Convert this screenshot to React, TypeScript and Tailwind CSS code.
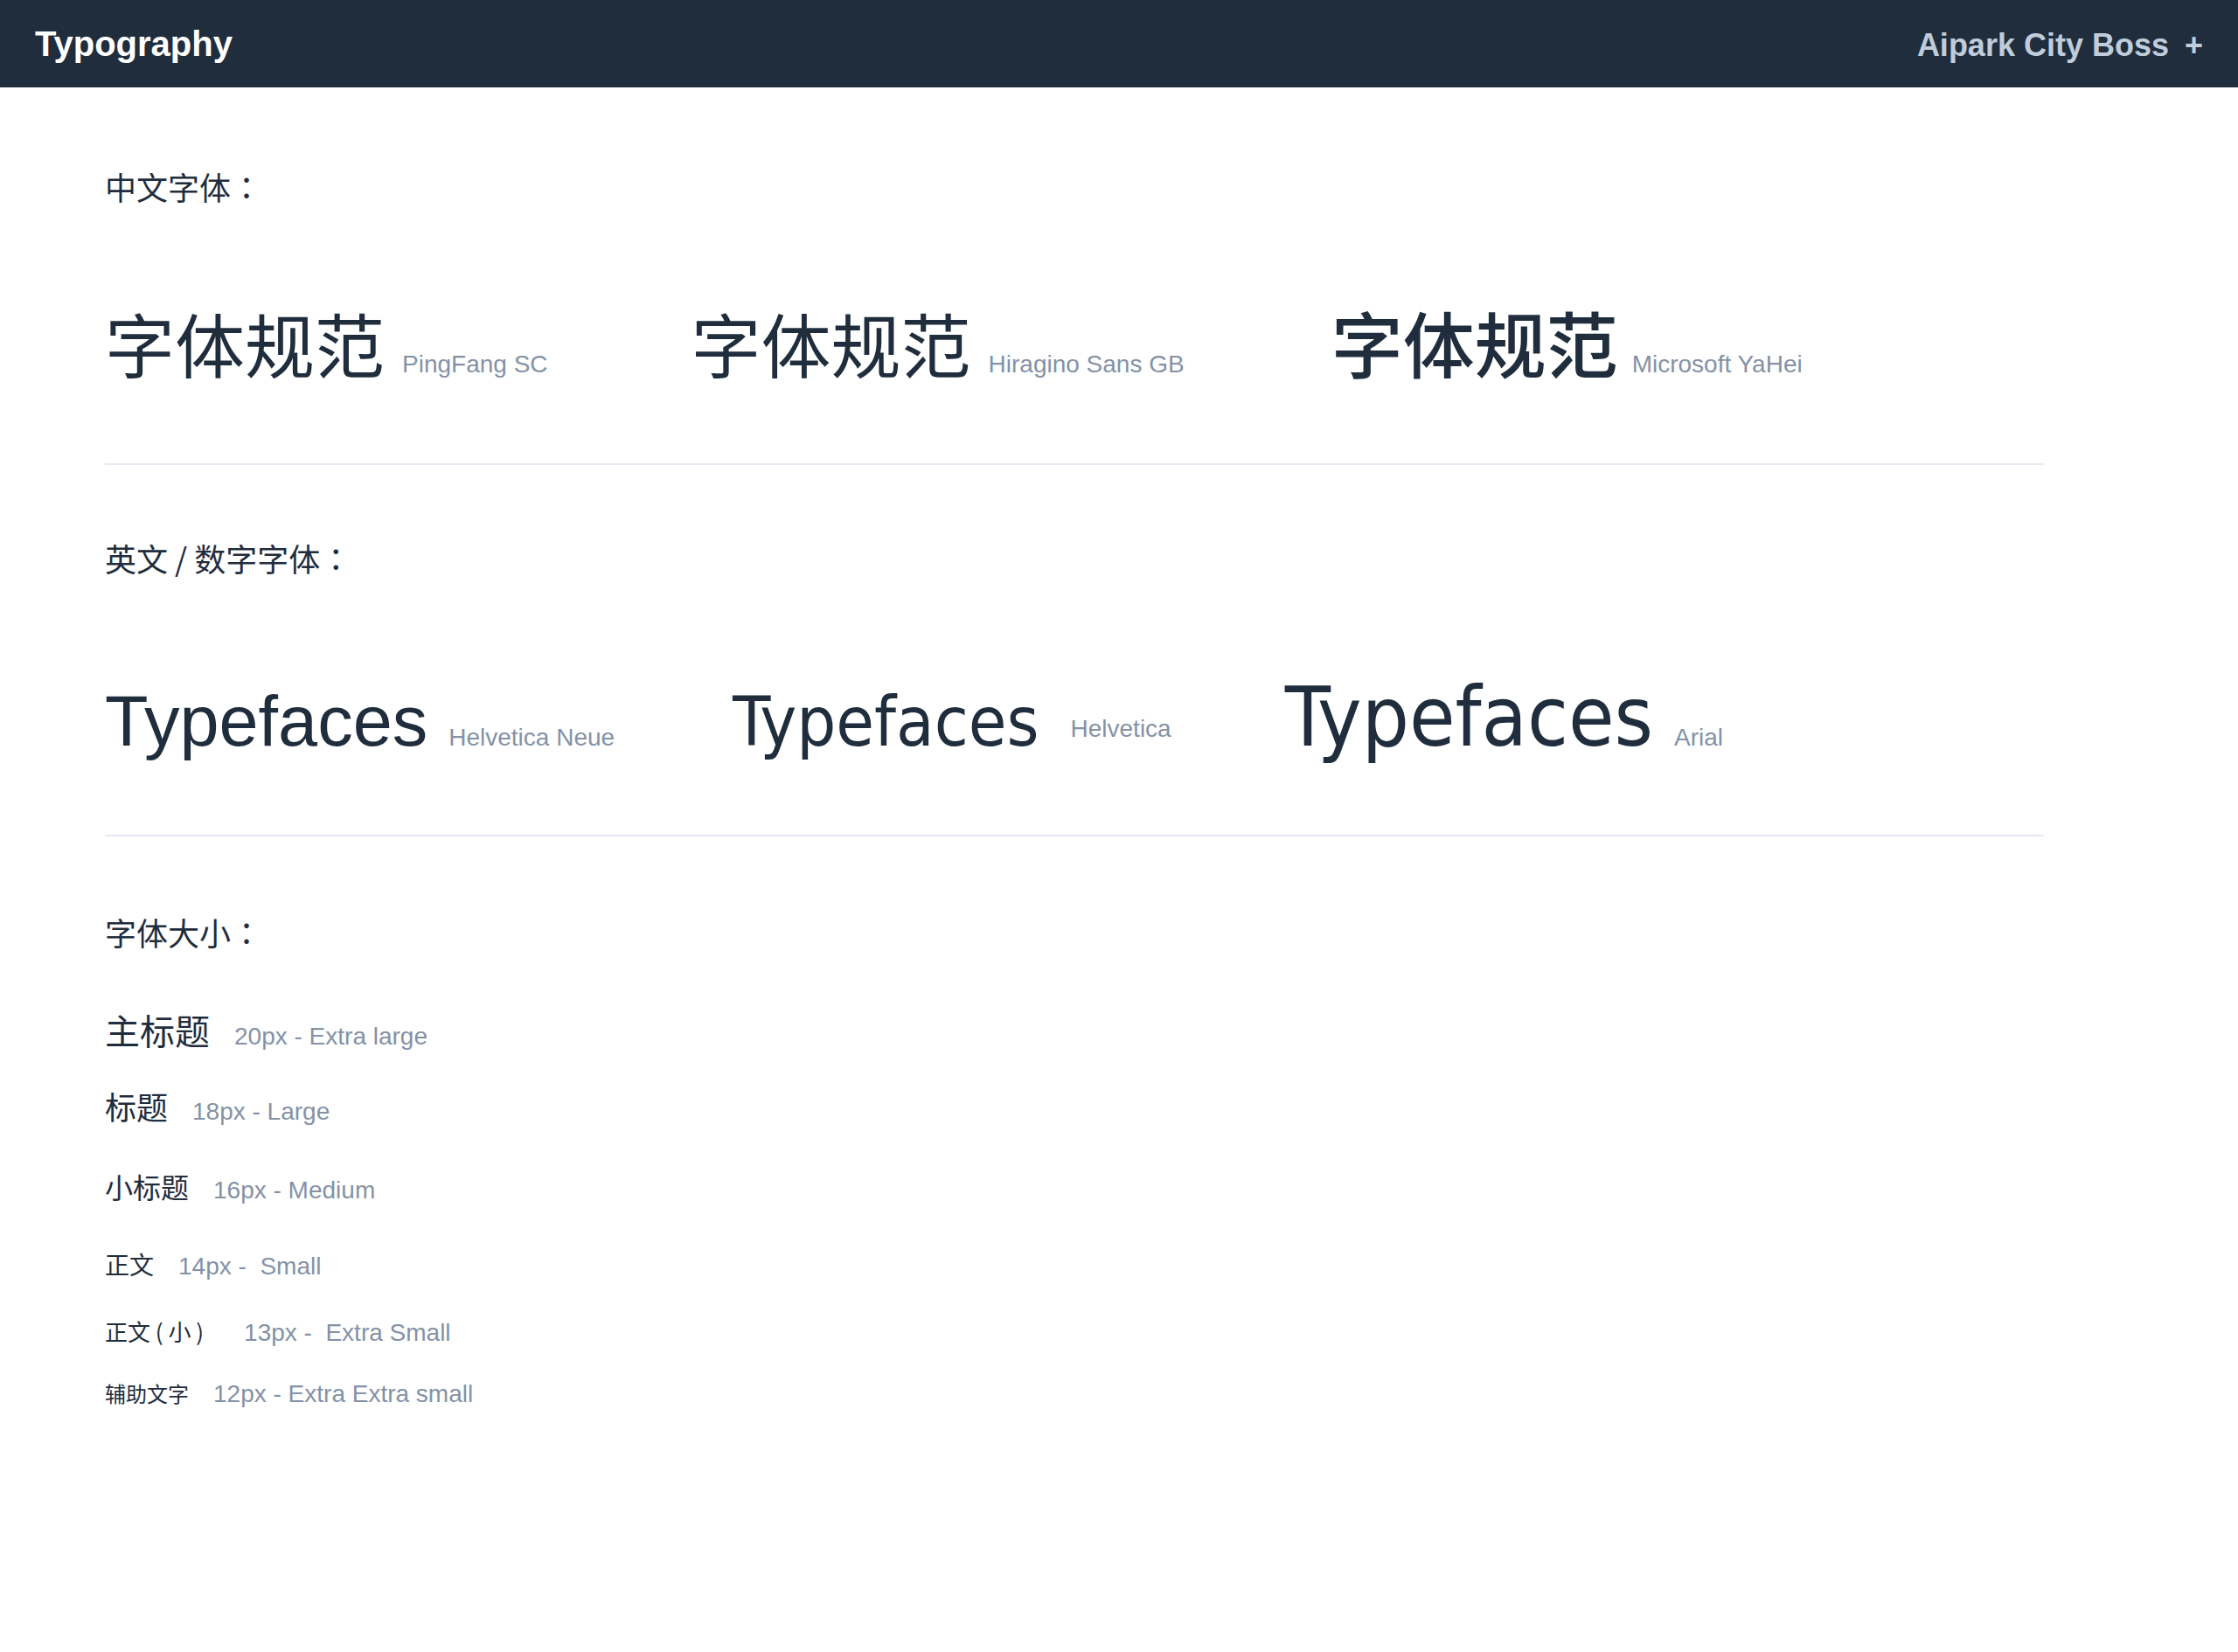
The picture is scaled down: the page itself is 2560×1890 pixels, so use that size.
const cjk = "font-['Noto_Sans_CJK_SC','Liberation_Sans',sans-serif]";
const cjkTc = "font-['Noto_Sans_CJK_TC','Noto_Sans_CJK_SC',sans-serif]";
const latin = "font-['Liberation_Sans','Noto_Sans_CJK_SC',sans-serif]";
const narrow = "font-['DejaVu_Sans','Liberation_Sans',sans-serif] [font-stretch:condensed]";

const sizes = [
  { name: '主标题', size: 'text-[40px]', label: '20px - Extra large', labelSize: 'text-[28px]', mt: 'mt-[55px]', gap: 'ml-[28px]' },
  { name: '标题', size: 'text-[36px]', label: '18px - Large', labelSize: 'text-[28px]', mt: 'mt-[27px]', gap: 'ml-[28px]' },
  { name: '小标题', size: 'text-[32px]', label: '16px - Medium', labelSize: 'text-[28px]', mt: 'mt-[32px]', gap: 'ml-[28px]' },
  { name: '正文', size: 'text-[28px]', label: '14px -  Small', labelSize: 'text-[28px]', mt: 'mt-[29px]', gap: 'ml-[28px]' },
  { name: '正文 ( 小 )', size: 'text-[26px]', label: '13px -  Extra Small', labelSize: 'text-[27px]', mt: 'mt-[17px]', gap: 'ml-[46px]' },
  { name: '辅助文字', size: 'text-[24px]', label: '12px - Extra Extra small', labelSize: 'text-[26px]', mt: 'mt-[11px]', gap: 'ml-[28px]' },
];

function Heading({ children, className = '' }: { children: string; className?: string }) {
  return (
    <h2 className={`${cjk} text-[36px] leading-[54px] font-normal text-[#1f2d3d] ${className}`}>
      {children}
      <span className={cjkTc}>：</span>
    </h2>
  );
}

function Label({ children, className = '' }: { children: string; className?: string }) {
  return <span className={`${latin} text-[28px] leading-none text-[#8492a6] whitespace-pre ${className}`}>{children}</span>;
}

export default function App() {
  return (
    <div className="min-h-screen bg-white">
      <header className="h-[100px] bg-[#1f2d3d] flex items-center justify-between px-[40px]">
        <h1 className={`${latin} text-[40px] leading-none font-bold text-white`}>Typography</h1>
        <div className={`${latin} mt-[4px] flex items-center text-[36px] leading-none font-bold text-[#c0ccda]`}>
          <span>Aipark City Boss</span>
          <span className="ml-[18px]">+</span>
        </div>
      </header>

      <main className="ml-[120px] w-[2218px] pt-[86px] pb-[200px]">
        {/* Chinese fonts */}
        <Heading>中文字体</Heading>
        <div className="mt-[110px] flex items-baseline">
          <span className={`${cjk} text-[80px] leading-none text-[#1f2d3d]`}>字体规范</span>
          <Label className="ml-[20px]">PingFang SC</Label>
          <span className={`${cjk} ml-[164px] text-[80px] leading-none text-[#1f2d3d]`}>字体规范</span>
          <Label className="ml-[20px]">Hiragino Sans GB</Label>
          <span className={`${cjk} ml-[168px] text-[82px] leading-none font-medium text-[#1f2d3d]`}>字体规范</span>
          <Label className="ml-[16px]">Microsoft YaHei</Label>
        </div>
        <div className="mt-[98px] h-[2px] bg-[#e5e9f2]" />

        {/* English / number fonts */}
        <Heading className="mt-[79px]">英文 / 数字字体</Heading>
        <div className="mt-[108px] flex items-baseline">
          <span className={`${latin} text-[81px] leading-none text-[#1f2d3d]`}>Typefaces</span>
          <Label className="ml-[24px]">Helvetica Neue</Label>
          <span className={`${narrow} ml-[135px] text-[79px] leading-none text-[#1f2d3d]`}>Typefaces</span>
          <Label className="ml-[36px] self-end mb-[20px]">Helvetica</Label>
          <span className={`${narrow} ml-[130px] text-[95px] leading-none text-[#1f2d3d]`}>Typefaces</span>
          <Label className="ml-[24px]">Arial</Label>
        </div>
        <div className="mt-[87px] h-[2px] bg-[#e5e9f2]" />

        {/* Font sizes */}
        <Heading className="mt-[82px]">字体大小</Heading>
        {sizes.map((s) => (
          <div key={s.name} className={`${s.mt} flex items-baseline`}>
            <span className={`${cjk} ${s.size} leading-[60px] text-[#1f2d3d] whitespace-pre`}>{s.name}</span>
            <Label className={`${s.gap} ${s.labelSize}`}>{s.label}</Label>
          </div>
        ))}
      </main>
    </div>
  );
}
